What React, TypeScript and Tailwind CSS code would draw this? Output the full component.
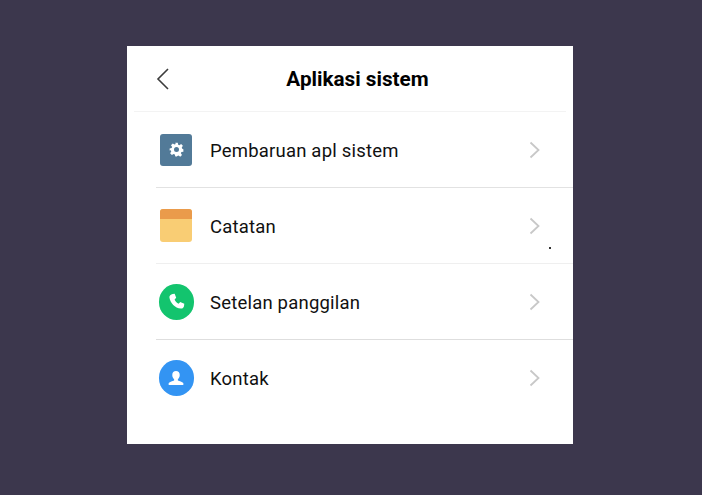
import React from "react";

function Chevron() {
  return (
    <svg width="12" height="18" viewBox="0 0 12 18" fill="none" stroke="#c8c8c8" strokeWidth="1.8" className="shrink-0">
      <path d="M1.5 1.5 L9.5 9 L1.5 16.5" />
    </svg>
  );
}

function GearIcon() {
  return (
    <div className="w-[32px] h-[32px] rounded-[3px] bg-[#527a98] flex items-center justify-center">
      <svg width="15" height="15" viewBox="0 0 24 24">
        <path
          fill="#ffffff"
          fillRule="evenodd"
          d="M10 1h4l.7 3.2 1.9.8 2.8-1.8 2.8 2.8-1.8 2.8.8 1.9L23 11.4v4l-3.2.6-.8 1.9 1.8 2.8-2.8 2.8-2.8-1.8-1.9.8L12.6 23h-2l-.6-.1-.7-3.1-1.9-.8-2.8 1.8-2.8-2.8 1.8-2.8-.8-1.9L1 13.6v-3.2l3.2-.7.8-1.9-1.8-2.8 2.8-2.8 2.8 1.8 1.9-.8z M12 8a4 4 0 1 0 0 8 4 4 0 0 0 0-8z"
        />
      </svg>
    </div>
  );
}

function NoteIcon() {
  return (
    <div className="w-[32px] h-[33px] mb-[1px] rounded-[3px] bg-[#f9cd74] overflow-hidden">
      <div className="h-[10px] bg-[#ea9b4b]" />
    </div>
  );
}

function PhoneIcon() {
  return (
    <div className="w-[35px] h-[36px] rounded-full bg-[#13c46e] flex items-center justify-center">
      <svg width="17" height="17" viewBox="0 0 24 24">
        <path
          fill="#ffffff"
          d="M6.6 1.5 L9.4 1 L11.6 6.8 L9.3 9.1 C10.2 11.3 12.4 13.9 15 15 L17.2 12.8 L23 15.2 L22.6 18.4 C22.3 20.6 20.4 22.4 18 22 C9.8 20.8 3.2 14.2 2 6.2 C1.7 3.8 3.9 1.9 6.6 1.5 Z"
        />
      </svg>
    </div>
  );
}

function ContactIcon() {
  return (
    <div className="w-[35px] h-[36px] rounded-full bg-[#3394f3] flex items-center justify-center">
      <svg width="16" height="16" viewBox="0 0 24 24">
        <path
          fill="#ffffff"
          d="M12 1.5 C15.4 1.5 17.6 4 17.6 7.4 C17.6 10.4 16.2 12.6 14.8 14 L14.8 15.6 C17.4 16.8 21 17.6 23 19.4 L23 22.5 L1 22.5 L1 19.4 C3 17.6 6.6 16.8 9.2 15.6 L9.2 14 C7.8 12.6 6.4 10.4 6.4 7.4 C6.4 4 8.6 1.5 12 1.5 Z"
        />
      </svg>
    </div>
  );
}

const rows = [
  { label: "Pembaruan apl sistem", icon: <GearIcon />, line: "border-[#e2e2e2]" },
  { label: "Catatan", icon: <NoteIcon />, line: "border-[#efefef]" },
  { label: "Setelan panggilan", icon: <PhoneIcon />, line: "border-[#dedede]" },
  { label: "Kontak", icon: <ContactIcon />, line: "border-transparent" },
];

export default function App() {
  return (
    <div className="w-[702px] h-[495px] bg-[#3c374d] pt-[46px] pl-[127px] overflow-hidden font-['Roboto',sans-serif]">
      <div className="relative w-[446px] h-[398px] bg-white">
        <div className="relative h-[66px] mx-[7px] border-b border-[#f3f3f3] flex items-center justify-center">
          <svg width="14" height="22" viewBox="0 0 14 22" fill="none" stroke="#3c3c3c" strokeWidth="1.6" className="absolute left-[22px] top-[22px]">
            <path d="M12 1 L2 11 L12 21" />
          </svg>
          <h1 className="text-[20.7px] leading-[24px] font-bold text-black ml-[15px] mt-[1px]">Aplikasi sistem</h1>
        </div>
        <div className="pl-[29px]">
          {rows.map((r) => (
            <div key={r.label} className={`h-[76px] flex items-center border-b ${r.line}`}>
              <div className="w-[36px] ml-[2px] flex justify-center shrink-0">{r.icon}</div>
              <span className="ml-[16px] mt-[2px] flex-1 text-[18.5px] leading-[24px] font-normal text-[#111111] tracking-[0.2px]">{r.label}</span>
              <div className="mr-[32px]"><Chevron /></div>
            </div>
          ))}
        </div>
        <div className="absolute left-[422px] top-[201px] w-[2px] h-[2px] bg-[#333333]" />
      </div>
    </div>
  );
}
